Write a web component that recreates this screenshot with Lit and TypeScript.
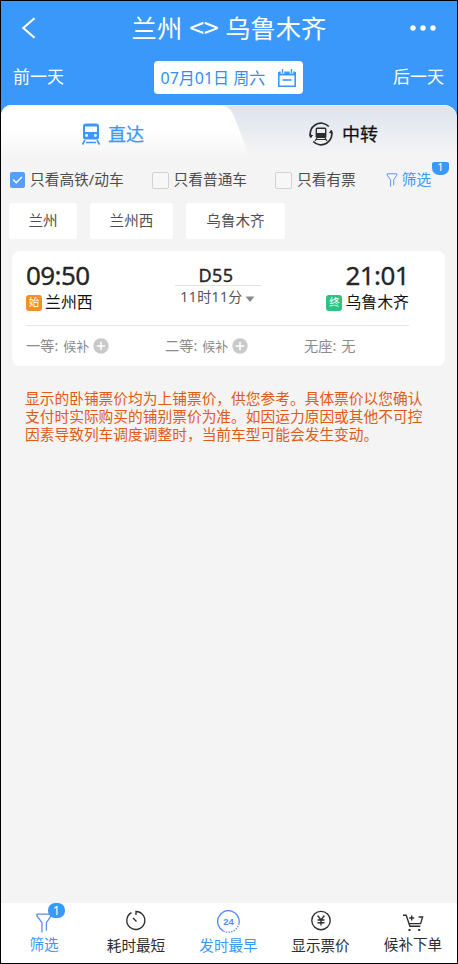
import { LitElement, html, svg, css } from "lit";
import { customElement, property } from "lit/decorators.js";
import { classMap } from "lit/directives/class-map.js";

const funnel = html`<svg class="funnel" viewBox="0 0 16 20" fill="none" stroke="currentColor" stroke-width="1.3">
  <path d="M6 19.5V9.7L1 3V1.2h14V3l-4.6 6.7v7.8" /></svg>`;

const clock = svg`<path d="M6.5 2.6A9 9 0 1 0 11 1.5V5M8 8l3.5 3.5" />`;
const yuan = svg`<circle cx="11" cy="10.5" r="9.2" />
  <path d="M7.6 5.5 11 10l3.4-4.5M7.5 10h7M7.5 12.7h7M11 10v5.5" />`;
const cart = svg`<path d="M1 4.2h3.2l3.7 11h10.4M6.3 12.6h12.3L20.6 6h-4M7.2 7h5M9.7 4.6v4.8" />
  <path d="M6.5 19h2M16.2 19h2" stroke-width="2" />`;

@customElement("plus-dot")
class PlusDot extends LitElement {
  static styles = css`
    :host { display: block; width: 16px; height: 16px; }
    svg { display: block; }
  `;
  render() {
    return html`<svg width="16" height="16" viewBox="0 0 16 16"><circle cx="8" cy="8" r="7.7" fill="#c9c9c9" />
      <path d="M3.8 8h8.4M8 3.8v8.4" stroke="#fff" stroke-width="1.5" /></svg>`;
  }
}

@customElement("check-option")
class CheckOption extends LitElement {
  @property({ type: Boolean }) checked = false;
  @property() label = "";
  static styles = css`
    :host { display: flex; align-items: center; height: 20px; }
    .box { box-sizing: border-box; width: 17px; height: 17px; border: 1px solid #d2d2d2; border-radius: 2px; background: #f7f7f7; margin-right: 5px; }
    .on { width: 15px; height: 16px; border: 0; background: #559ffb; margin-right: 5px; }
    svg { display: block; }
    span { font-size: 14.7px; line-height: 20px; color: #4c4c4c; white-space: nowrap; margin-top: -2px; }
  `;
  render() {
    return html`<div class=${classMap({ box: true, on: this.checked })}>
        ${this.checked ? html`<svg width="15" height="16" viewBox="0 0 15 16"><path d="m3 7.5 3.2 3.2L12 5" fill="none" stroke="#fff" stroke-width="1.4" /></svg>` : ""}
      </div><span>${this.label}</span>`;
  }
}

@customElement("app-root")
class AppRoot extends LitElement {
  static styles = css`
    :host { display: block; font-family: "Noto Sans", "Noto Sans CJK SC", sans-serif; }
    * { box-sizing: border-box; }
    svg { display: block; flex: none; }
    .screen { width: 458px; height: 964px; border: 1px solid #000; background: #f4f4f4; display: flex; flex-direction: column; white-space: nowrap; overflow: hidden; }
    .head { background: #3b98fb; height: 104px; color: #fff; flex: none; }
    .title { height: 53px; display: grid; grid-template-columns: 60px 1fr 60px; align-items: center; }
    .title h1 { margin: -2px 0 0; font-weight: 400; font-size: 25.3px; line-height: 36px; text-align: center; font-family: "Noto Sans CJK SC", sans-serif; display: flex; gap: 7px; justify-content: center; }
    .angles { letter-spacing: -0.5px; font-size: 27px; }
    .back { margin-left: 20px; }
    .more { margin-left: 12px; }
    .days { display: flex; justify-content: space-between; align-items: center; padding: 0 13px 0 12px; height: 47px; font-size: 17px; line-height: 24px; }
    .day { margin-top: -2px; }
    .date { display: flex; align-items: center; justify-content: space-between; width: 149px; height: 33px; margin-left: -1px; padding: 0 7px; background: #fff; border-radius: 4px; color: #2f8ff0; font-size: 16px; }
    .tabs { height: 55px; flex: none; background: #3b98fb; }
    .tabs-in { height: 55px; display: grid; grid-template-columns: 233px 223px; background: linear-gradient(#dde3ed, #e8ecf2 45%, #f4f4f4 90%); border-radius: 10px 13px 0 0; box-shadow: inset 0 1px #f3f7fb; position: relative; }
    .shape { position: absolute; left: 0; top: 0; }
    .tab { position: relative; display: flex; align-items: center; height: 58px; font-size: 18px; line-height: 26px; }
    .direct { color: #3b98fb; padding-left: 80px; gap: 7px; }
    .transfer { color: #111; padding-left: 75px; gap: 9px; }
    .tab span { -webkit-text-stroke: 0.25px currentColor; }
    .filters { height: 42px; display: flex; align-items: center; padding: 0 8px 2px 9px; position: relative; flex: none; }
    .o2 { margin-left: 28px; }
    .o3 { margin-left: 28px; }
    .pick { display: flex; align-items: center; margin-left: 30px; color: #3b98fb; font-size: 14.7px; gap: 4px; line-height: 20px; }
    .pick span { margin-top: -2px; }
    .pick .funnel { width: 12px; height: 14px; color: #568cf2; }
    .badge { position: absolute; background: #3b98fb; color: #fff; border-radius: 7px; width: 17px; height: 15px; font-size: 12px; line-height: 15px; text-align: center; }
    .b1 { left: 431px; top: 2px; height: 13px; line-height: 10px; border-radius: 2px 2px 7px 7px; font-size: 11px; }
    .b2 { left: 47px; top: 0; }
    .chips { display: flex; gap: 13px; padding: 1px 0 0 8px; flex: none; }
    .chip { height: 36px; background: #fff; border-radius: 3px; font-size: 14.6px; line-height: 34px; text-align: center; color: #4f4f4f; }
    .c0 { width: 68px; } .c1 { width: 83px; } .c2 { width: 99px; }
    .card { margin: 12px 12px 0 11px; height: 115px; background: #fff; border-radius: 8px; padding: 0 36px 0 14px; flex: none; }
    .trip { display: flex; justify-content: space-between; height: 75px; border-bottom: 1px solid #e5e5e5; }
    .end { padding-top: 8px; color: #262626; }
    .time { font-size: 26px; line-height: 32px; letter-spacing: -0.6px; -webkit-text-stroke: 0.3px currentColor; }
    .right .time { text-align: right; }
    .station { display: flex; align-items: center; gap: 3px; height: 22px; font-size: 15.9px; line-height: 20px; color: #111; }
    .tag { width: 16px; height: 16px; border-radius: 3px; color: #fff; font-size: 10.5px; line-height: 15px; text-align: center; background: #f78f25; margin-top: 2px; }
    .green { background: #30c283; }
    .mid { width: 86px; margin-left: 16px; margin-top: 14px; text-align: center; }
    .no { font-size: 18px; line-height: 20px; height: 21px; padding-right: 3px; letter-spacing: 0.5px; color: #222; border-bottom: 1px solid #e2e2e2; -webkit-text-stroke: 0.3px currentColor; }
    .dur { font-size: 14px; letter-spacing: 0.4px; line-height: 21px; color: #555; display: flex; align-items: center; gap: 2px; justify-content: center; }
    .dur svg { margin-top: 4px; }
    .seats { display: grid; grid-template-columns: 139px 139px 1fr; font-size: 14.2px; line-height: 20px; color: #8b8b8b; padding-top: 10px; }
    .seat { display: flex; align-items: center; gap: 5px; height: 20px; }
    .seat small { font-size: 13px; }
    .seat plus-dot { margin-left: -1px; }
    .notice { margin: 23px 0 0 24px; color: #e35a16; font-size: 14.72px; line-height: 18px; flex: 1; }
    .bar { height: 60px; background: #fff; display: grid; grid-template-columns: 86px 98px 87px 97px 88px; flex: none; color: #2d2d2d; }
    .item { position: relative; display: flex; flex-direction: column; align-items: center; padding-top: 7px; font-size: 14.6px; line-height: 20px; }
    .item span { margin-top: 3px; }
    .item .funnel { width: 16px; height: 20px; color: #568cf2; margin-top: 3px; }
    .item .funnel + span { margin-top: 1px; }
    .up svg { margin-top: 1px; }
    .up span { margin-top: 1px; }
    .blue { color: #3b98fb; }
    .n24 { width: 23px; height: 23px; margin-bottom: -1px; }
    .n24 text { font: 700 9px "Liberation Sans", sans-serif; fill: #568cf2; }
  `;

  icon(body: unknown) {
    return html`<svg width="22" height="22" viewBox="0 0 22 22" fill="none" stroke="currentColor" stroke-width="1.35">${body}</svg>`;
  }

  render() {
    return html`<div class="screen">
      <div class="head">
        <div class="title">
          <svg class="back" width="15" height="22" viewBox="0 0 15 22"><path d="M13.5 1.2 2.3 11l11.2 9.8" fill="none" stroke="#fff" stroke-width="2.1" /></svg>
          <h1><span>兰州</span><span class="angles">&lt;&gt;</span><span>乌鲁木齐</span></h1>
          <svg class="more" width="28" height="8" viewBox="0 0 28 8" fill="#fff"><circle cx="4" cy="4" r="2.7" /><circle cx="14" cy="4" r="2.7" /><circle cx="24" cy="4" r="2.7" /></svg>
        </div>
        <div class="days">
          <span class="day">前一天</span>
          <div class="date"><span>07月01日 周六</span>
            <svg width="18" height="18" viewBox="0 0 18 18" fill="none" stroke="#3b98fb"><path d="M.8 3v14.2h16.4V3" stroke-width="1.6" /><path d="M1 4.5h16" stroke-width="4" /><path d="M4.5 0v4.500M13.500 0v4.500" stroke="#fff" stroke-width="3.600" /><path d="M4.500 0v4M13.500 0v4" stroke-width="1.400" /><path d="M4.500 11h9" stroke-width="1.600" /></svg>
          </div>
          <span class="day">后一天</span>
        </div>
      </div>
      <div class="tabs"><div class="tabs-in">
        <svg class="shape" width="256" height="55" viewBox="0 0 256 55">
          <defs><linearGradient id="fade" x1="0" y1="0" x2="0" y2="1"><stop offset=".45" stop-color="#fff" /><stop offset="1" stop-color="#f4f4f4" /></linearGradient></defs>
          <path d="M0 55V9Q3 0 13 0H216Q228 0 232 9L250 55Z" fill="url(#fade)" />
        </svg>
        <div class="tab direct">
          <svg width="20" height="22" viewBox="0 0 20 22"><path d="M5 .5h10Q18 .5 18 3.5V14Q18 16.5 15.5 16.5h-11Q2 16.5 2 14V3.5Q2 .5 5 .5Z" fill="#3b98fb" /><path d="M4 3.5h12V9H4Z" fill="#fff" /><circle cx="5.6" cy="12.5" r="1.4" fill="#fff" /><circle cx="14.4" cy="12.5" r="1.4" fill="#fff" /><path d="M4 17 1.5 21.5M16 17l2.5 4.5M5 19.5h10" stroke="#3b98fb" stroke-width="1.7" /></svg>
          <span>直达</span>
        </div>
        <div class="tab transfer">
          <svg width="24" height="24" viewBox="0 0 24 24"><g fill="none" stroke="#2b2b2b" stroke-width="1.7"><path d="M1.8 15.500A10.800 10.800 0 0 1 19.800 4.500M22.200 8.500A10.800 10.800 0 0 1 4.200 19.500" /></g><path d="M.6 12.500 1.800 15.500 3.600 13M23.400 11.500 22.200 8.500 20.400 11" stroke="#2b2b2b" fill="#2b2b2b" /><rect x="6.6" y="5.500" width="10.800" height="10.500" rx="1.500" fill="#2b2b2b" /><path d="M8 7h8v4H8Z" fill="#e9edf3" /><path d="m8 16-2 3M16 16l2 3M7 17.500h10" stroke="#2b2b2b" stroke-width="1.200" /></svg>
          <span>中转</span>
        </div>
      </div></div>
      <div class="filters">
        <check-option checked label="只看高铁/动车"></check-option>
        <check-option class="o2" label="只看普通车"></check-option>
        <check-option class="o3" label="只看有票"></check-option>
        <div class="pick">${funnel}<span>筛选</span></div>
        <div class="badge b1">1</div>
      </div>
      <div class="chips">${["兰州", "兰州西", "乌鲁木齐"].map((c, i) => html`<div class="chip c${i}">${c}</div>`)}</div>
      <div class="card">
        <div class="trip">
          <div class="end"><div class="time">09:50</div><div class="station"><div class="tag">始</div>兰州西</div></div>
          <div class="mid"><div class="no">D55</div>
            <div class="dur">11时11分<svg width="10" height="6" viewBox="0 0 10 6"><path d="M.5.5h9L5 6Z" fill="#8a8a8a" /></svg></div></div>
          <div class="end right"><div class="time">21:01</div><div class="station"><div class="tag green">终</div>乌鲁木齐</div></div>
        </div>
        <div class="seats">
          <div class="seat"><span>一等:</span><small>候补</small><plus-dot></plus-dot></div>
          <div class="seat"><span>二等:</span><small>候补</small><plus-dot></plus-dot></div>
          <div class="seat"><span>无座:</span><span>无</span></div>
        </div>
      </div>
      <div class="notice">显示的卧铺票价均为上铺票价，供您参考。具体票价以您确认<br />支付时实际购买的铺别票价为准。如因运力原因或其他不可控<br />因素导致列车调度调整时，当前车型可能会发生变动。</div>
      <div class="bar">
        <div class="item blue">${funnel}<span>筛选</span><div class="badge b2">1</div></div>
        <div class="item">${this.icon(clock)}<span>耗时最短</span></div>
        <div class="item blue"><svg class="n24" viewBox="0 0 22 22"><path d="M6 20A10.3 10.3 0 1 1 21 13" fill="none" stroke="#568cf2" stroke-width="1.3" /><path d="M21 13A10.3 10.3 0 0 1 6 20" fill="none" stroke="#568cf2" stroke-width="1.3" stroke-dasharray="1.3 1.2" /><text x="11" y="14.2" text-anchor="middle">24</text></svg><span>发时最早</span></div>
        <div class="item">${this.icon(yuan)}<span>显示票价</span></div>
        <div class="item up">${this.icon(cart)}<span>候补下单</span></div>
      </div>
    </div>`;
  }
}
